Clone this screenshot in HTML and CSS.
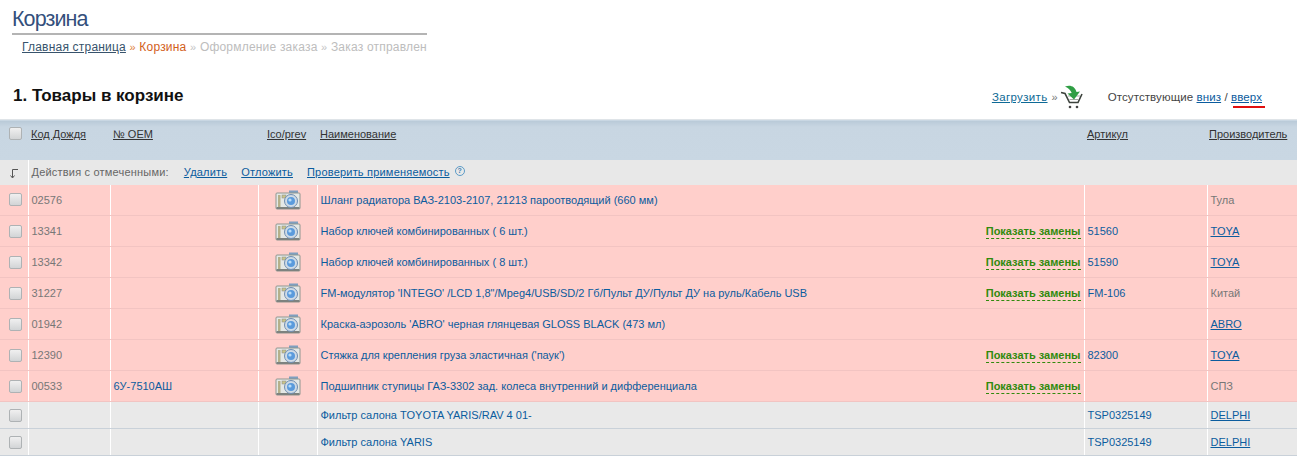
FILE: index.html
```html
<!DOCTYPE html>
<html lang="ru">
<head>
<meta charset="utf-8">
<title>Корзина</title>
<link rel="stylesheet" href="styles.css">
</head>
<body>
<svg class="defs" width="0" height="0" aria-hidden="true">
  <symbol id="cam" viewBox="0 0 26 20">
    <rect x="14" y="0.5" width="9" height="4" fill="#7f9fc0"/>
    <rect x="1" y="3" width="24" height="16" rx="1" fill="#e4e8e6" stroke="#8f9690"/>
    <rect x="1.500" y="17" width="23" height="2" fill="#7d827f"/>
    <rect x="3" y="5" width="2.500" height="12" fill="#b5b08a"/>
    <rect x="7" y="5" width="4" height="3" fill="#c9c48a" stroke="#888"  stroke-width=".5"/>
    <circle cx="16" cy="11" r="6.500" fill="#cfdbe6" stroke="#6f8db0"/>
    <circle cx="16" cy="11" r="4" fill="#5b9bdc"/>
    <circle cx="15" cy="10" r="1.600" fill="#b9dcf7"/>
  </symbol>
</svg>
<header class="top">
  <h1 class="title">Корзина</h1>
  <nav class="crumbs"><a class="home" href="#">Главная страница</a> <i class="sep on">»</i> <span class="cur">Корзина</span> <i class="sep">»</i> Оформление заказа <i class="sep">»</i> Заказ отправлен</nav>
</header>
<section class="bar">
  <h2 class="heading">1. Товары в корзине</h2>
  <div class="tools">
    <a class="load" href="#">Загрузить</a><i class="sep dark">»</i>
    <svg class="cart" width="24" height="24" viewBox="0 0 24 24" aria-hidden="true">
      <path d="M1 7.500l4 1 4.500 9h8.500L22 9" fill="none" stroke="#3c423c" stroke-width="1.600"/>
      <path d="M8 11h12M9.500 14.500h9.500" stroke="#a5aaa5"/>
      <circle cx="10" cy="22" r="1.300" fill="#444"/><circle cx="17" cy="22" r="1.300" fill="#444"/>
      <path d="M5 1.500C10-.5 15 1 16.500 7L20 6.500 14 14.500 7.500 8.500l4.200-.5C10.500 5 8.500 3 5 1.500Z" fill="#2f9e44"/>
    </svg>
    <span class="missing">Отсутствующие <a href="#">вниз</a> / <a class="up" href="#">вверх</a></span>
  </div>
</section>
<table class="grid">
  <colgroup><col class="c1"><col class="c2"><col class="c3"><col class="c4"><col class="c5"><col class="c6"><col class="c7"></colgroup>
  <thead>
    <tr class="head">
      <th><span class="box"></span></th><th><a href="#">Код Дождя</a></th><th><a href="#">№ OEM</a></th><th class="ico"><a href="#">Ico/prev</a></th><th><a href="#">Наименование</a></th><th><a href="#">Артикул</a></th><th class="maker"><a href="#">Производитель</a></th>
    </tr>
    <tr class="acts">
      <td class="arrow"><svg class="turn" width="12" height="11" viewBox="0 0 12 11" aria-hidden="true"><path d="M10 1.500H4.500V9.500M2.500 7.500L4.500 10 6.500 7.500" fill="none" stroke="#555"/></svg></td>
      <td colspan="6"><div class="actline"><span>Действия с отмеченными:</span><a href="#">Удалить</a><a href="#">Отложить</a><a href="#">Проверить применяемость</a><b class="q">?</b></div></td>
    </tr>
  </thead>
  <tbody>
    <tr class="red"><td><span class="box"></span></td><td>02576</td><td></td><td class="ph"><svg width="26" height="20"><use href="#cam"/></svg></td><td><div class="nm"><a href="#">Шланг радиатора ВАЗ-2103-2107, 21213 пароотводящий (660 мм)</a></div></td><td></td><td>Тула</td></tr>
    <tr class="red"><td><span class="box"></span></td><td>13341</td><td></td><td class="ph"><svg width="26" height="20"><use href="#cam"/></svg></td><td><div class="nm"><a href="#">Набор ключей комбинированных ( 6 шт.)</a><a class="swap" href="#">Показать замены</a></div></td><td><a href="#" class="art">51560</a></td><td><a href="#" class="mk">TOYA</a></td></tr>
    <tr class="red"><td><span class="box"></span></td><td>13342</td><td></td><td class="ph"><svg width="26" height="20"><use href="#cam"/></svg></td><td><div class="nm"><a href="#">Набор ключей комбинированных ( 8 шт.)</a><a class="swap" href="#">Показать замены</a></div></td><td><a href="#" class="art">51590</a></td><td><a href="#" class="mk">TOYA</a></td></tr>
    <tr class="red"><td><span class="box"></span></td><td>31227</td><td></td><td class="ph"><svg width="26" height="20"><use href="#cam"/></svg></td><td><div class="nm"><a href="#">FM-модулятор 'INTEGO' /LCD 1,8"/Mpeg4/USB/SD/2 Гб/Пульт ДУ/Пульт ДУ на руль/Кабель USB</a><a class="swap" href="#">Показать замены</a></div></td><td><a href="#" class="art">FM-106</a></td><td>Китай</td></tr>
    <tr class="red"><td><span class="box"></span></td><td>01942</td><td></td><td class="ph"><svg width="26" height="20"><use href="#cam"/></svg></td><td><div class="nm"><a href="#">Краска-аэрозоль 'ABRO' черная глянцевая GLOSS BLACK (473 мл)</a></div></td><td></td><td><a href="#" class="mk">ABRO</a></td></tr>
    <tr class="red"><td><span class="box"></span></td><td>12390</td><td></td><td class="ph"><svg width="26" height="20"><use href="#cam"/></svg></td><td><div class="nm"><a href="#">Стяжка для крепления груза эластичная ('паук')</a><a class="swap" href="#">Показать замены</a></div></td><td><a href="#" class="art">82300</a></td><td><a href="#" class="mk">TOYA</a></td></tr>
    <tr class="red"><td><span class="box"></span></td><td>00533</td><td><a href="#" class="art">6У-7510АШ</a></td><td class="ph"><svg width="26" height="20"><use href="#cam"/></svg></td><td><div class="nm"><a href="#">Подшипник ступицы ГАЗ-3302 зад. колеса внутренний и дифференциала</a><a class="swap" href="#">Показать замены</a></div></td><td></td><td>СПЗ</td></tr>
    <tr class="gray"><td><span class="box"></span></td><td></td><td></td><td></td><td><div class="nm"><a href="#">Фильтр салона TOYOTA YARIS/RAV 4 01-</a></div></td><td><a href="#" class="art">TSP0325149</a></td><td><a href="#" class="mk">DELPHI</a></td></tr>
    <tr class="gray"><td><span class="box"></span></td><td></td><td></td><td></td><td><div class="nm"><a href="#">Фильтр салона YARIS</a></div></td><td><a href="#" class="art">TSP0325149</a></td><td><a href="#" class="mk">DELPHI</a></td></tr>
  </tbody>
</table>
</body>
</html>
```
FILE: styles.css
```css
html, body { margin: 0; padding: 0; background: #fff; overflow: hidden; }
body { width: 1297px; height: 456px; font-family: "Liberation Sans", Arial, sans-serif; font-size: 11px; color: #777; }
.defs { position: absolute; }
a { color: #0b5c9e; }
.top { width: 415px; margin-left: 12px; }
.title { margin: 0; height: 35px; box-sizing: border-box; padding-top: 6px; font-size: 21.500px; line-height: 26px; font-weight: 400; color: #34507c; border-bottom: 2px solid #b4b4b4; letter-spacing: -.9px; }
.crumbs { padding: 5px 0 0 10px; font-size: 12px; line-height: 15px; color: #bdbdbd; white-space: nowrap; letter-spacing: .2px; }
.home { color: #37536c; }
.cur { color: #d2601a; }
.sep { font-style: normal; font-size: 11px; color: #c4c4c4; }
.sep.on { color: #e0803a; }
.sep.dark { color: #777; margin: 0 3px 0 4px; }
.bar { display: flex; align-items: center; justify-content: space-between; height: 34px; margin-top: 24px; padding-left: 13px; }
.heading { margin: 0; font-size: 17px; line-height: 20px; color: #111; font-weight: 700; }
.tools { display: flex; align-items: center; padding-right: 35px; position: relative; top: 1px; }
.load { color: #0e6a96; font-size: 11.500px; letter-spacing: .35px; }
.cart { display: block; margin-left: -1px; }
.missing { margin-left: 24px; color: #444; font-size: 11.500px; letter-spacing: .1px; }
.missing a { color: #0b5c9e; }
.up { position: relative; }
.up::after { content: ""; position: absolute; left: 2px; bottom: -5px; width: 32px; height: 2px; background: #e01010; }
.grid { width: 1297px; table-layout: fixed; border-collapse: collapse; margin-top: 6px; }
.c1 { width: 28px; } .c2 { width: 82px; } .c3 { width: 148px; } .c4 { width: 59px; } .c5 { width: 767px; } .c6 { width: 123px; } .c7 { width: 90px; }
.grid th, .grid td { padding: 0 0 0 3px; font-size: 11px; text-align: left; vertical-align: middle; white-space: nowrap; overflow: hidden; }
.head { height: 40px; background: linear-gradient(#b9cad8 0, #c8d6e2 6px, #c9d7e3 100%); border-top: 1px solid #dfe4e8; }
.grid .head th { font-weight: 400; vertical-align: top; padding: 8px 0 0 3px; }
.head a { color: #333; }
.grid .head th.ico { padding-left: 9px; }
.grid .head th.maker { padding-left: 2px; }
.grid .head th:first-child { padding: 7px 0 0 9px; }
.acts { height: 25px; background: #e8e8e8; }
.actline { display: flex; align-items: center; }
.actline span { color: #666; margin-right: 15px; letter-spacing: .2px; }
.actline a { margin-right: 14px; letter-spacing: .2px; }
.q { display: inline-flex; align-items: center; justify-content: center; width: 8px; height: 8px; margin: -3px 0 0 -9px; border: 1px solid #5c9bc7; border-radius: 50%; font-size: 7px; color: #3f7fb0; }
.grid .arrow { border-right: 1px solid #fff; text-align: center; padding: 0; }
.turn { display: block; margin: 2px auto 0; }
.red { height: 31px; background: #ffcfcb; }
.gray { height: 27px; background: #e9e9e9; }
.red td, .gray td { border-right: 1px solid #fff; border-bottom: 1px solid #cfd4d8; }
.red td { border-bottom-color: #f2c4c2; }
.gray td { border-bottom-color: #c9d1d9; }
.red td:last-child, .gray td:last-child { border-right: 0; }
.grid tbody td:first-child { padding: 0 0 0 9px; }
.box { display: block; width: 11px; height: 11px; border: 1px solid #aeb2b4; border-radius: 2px; background: linear-gradient(#f0f0f0, #d2d4d6); }
.grid .ph { text-align: center; padding: 0; }
.ph svg { display: block; margin: 0 auto; }
.nm { display: flex; justify-content: space-between; align-items: center; }
.nm a { color: #0b5c9e; text-decoration: none; }
.nm .swap { color: #2f8a0c; font-weight: 700; border-bottom: 1px dashed #2f8a0c; margin-right: 3px; line-height: 14px; }
.art { color: #0b5c9e; text-decoration: none; }
.mk { color: #0b5c9e; }
```
